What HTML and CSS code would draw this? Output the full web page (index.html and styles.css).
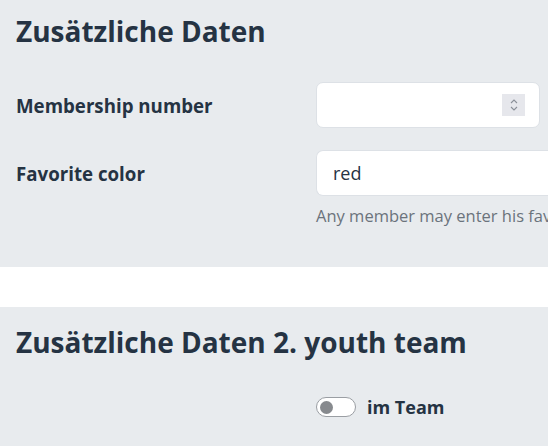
FILE: index.html
```html
<!DOCTYPE html>
<html>
<head>
    <meta charset="UTF-8">
    <title>Zusätzliche Daten</title>
    <link rel="stylesheet" href="styles.css">
</head>
<body>
    <!--erste Gruppe-->
    <section class="card card_first">
        <h2 class="card_title">Zusätzliche Daten</h2>
        <div class="form_row">
            <label class="form_label">Membership number</label>
            <div class="form_field">
                <div class="input_box input_number">
                    <span class="spinner">
                        <svg width="12" height="18" viewBox="0 0 12 18">
                            <path d="M3 7 L6 4 L9 7" fill="none" stroke="#8a8f98" stroke-width="1.1"/>
                            <path d="M3 11 L6 14 L9 11" fill="none" stroke="#8a8f98" stroke-width="1.1"/>
                        </svg>
                    </span>
                </div>
            </div>
        </div>
        <div class="form_row">
            <label class="form_label">Favorite color</label>
            <div class="form_field">
                <div class="input_box input_wide">red</div>
            </div>
        </div>
        <div class="form_row form_row_help">
            <span></span>
            <div class="form_help">Any member may enter his favorite color here.</div>
        </div>
    </section>

    <div class="card_gap"></div>

    <!--zweite Gruppe-->
    <section class="card card_second">
        <h2 class="card_title">Zusätzliche Daten 2. youth team</h2>
        <div class="form_row">
            <span></span>
            <div class="switch_row">
                <span class="switch"><span class="switch_knob"></span></span>
                <span class="switch_label">im Team</span>
            </div>
        </div>
    </section>
</body>
</html>
```

FILE: styles.css
```css
* {padding:0;margin:0;box-sizing:border-box;}
html,body {width:100%;height:100%;overflow:hidden;}
body {background:#fff;font-family:"Open Sans","Noto Sans",sans-serif;color:#253343;}

.card {background:#e8ebee;padding:20px 16px 24px 16px;}
.card_first {padding-top:13px;padding-bottom:40px;}
.card_second {padding-top:17px;}
.card_gap {height:40px;background:#fff;}

.card_title {font-family:"Open Sans","Noto Sans",sans-serif;font-weight:700;font-size:28px;line-height:36px;color:#253343;margin-bottom:35px;}
.card_first .card_title {margin-bottom:33px;}

.form_row {display:grid;grid-template-columns:300px 1fr;align-items:center;margin-bottom:22px;}
.form_row_help {margin-top:-14px;margin-bottom:0;}
.form_label {font-family:"Open Sans","Noto Sans",sans-serif;font-weight:700;font-size:18.7px;color:#253343;}

.input_box {height:46px;background:#fff;border:1px solid #dde1e6;border-radius:7px;display:flex;align-items:center;padding:0 16px;font-size:18px;color:#253343;}
.input_number {width:224px;justify-content:flex-end;padding-right:14px;}
.input_wide {width:280px;border-right:none;border-radius:7px 0 0 7px;}
.spinner {width:23px;height:22px;background:#e6e7ec;display:flex;align-items:center;justify-content:center;}

.form_help {font-size:16.5px;color:#6b737c;white-space:nowrap;}

.switch_row {display:flex;align-items:center;gap:11px;}
.switch {width:40px;height:20px;border:1px solid #9a9ea3;border-radius:10px;background:#fff;display:flex;align-items:center;padding-left:3px;}
.switch_knob {width:13px;height:13px;border-radius:50%;background:#878a8e;}
.switch_label {font-family:"Open Sans","Noto Sans",sans-serif;font-weight:700;font-size:18px;color:#253343;}
```
